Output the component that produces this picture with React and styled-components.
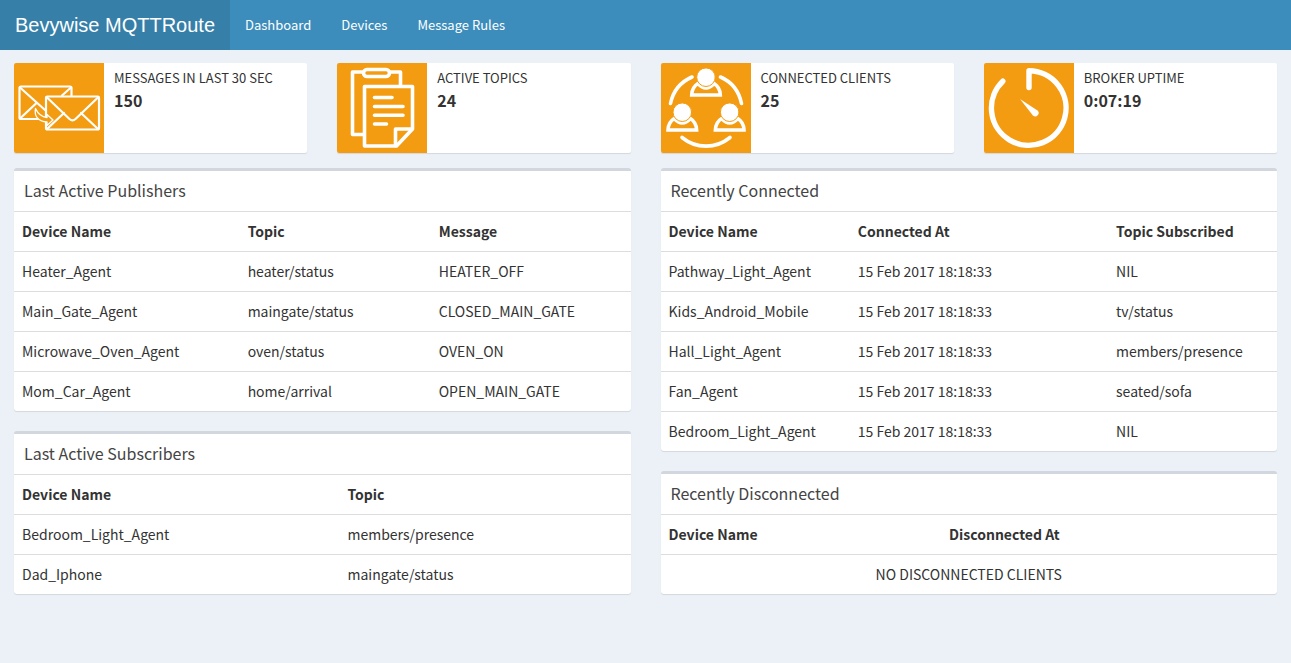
import React from 'react';
import styled, { createGlobalStyle } from 'styled-components';

const publishers = [
  ['Heater_Agent', 'heater/status', 'HEATER_OFF'],
  ['Main_Gate_Agent', 'maingate/status', 'CLOSED_MAIN_GATE'],
  ['Microwave_Oven_Agent', 'oven/status', 'OVEN_ON'],
  ['Mom_Car_Agent', 'home/arrival', 'OPEN_MAIN_GATE'],
];

const subscribers = [
  ['Bedroom_Light_Agent', 'members/presence'],
  ['Dad_Iphone', 'maingate/status'],
];

const connected = [
  ['Pathway_Light_Agent', '15 Feb 2017 18:18:33', 'NIL'],
  ['Kids_Android_Mobile', '15 Feb 2017 18:18:33', 'tv/status'],
  ['Hall_Light_Agent', '15 Feb 2017 18:18:33', 'members/presence'],
  ['Fan_Agent', '15 Feb 2017 18:18:33', 'seated/sofa'],
  ['Bedroom_Light_Agent', '15 Feb 2017 18:18:33', 'NIL'],
];

function MessagesIcon() {
  return (
    <Icon viewBox="0 0 90 90" strokeWidth="2.2">
      <rect x="5.5" y="23.5" width="52" height="32.5" rx="1.5" />
      <path d="M6 24.500L31 47M57 24.500l-9 8M6 55.500l16-15" />
      <rect x="32" y="33.500" width="53" height="33" rx="1.5" fill="#f39c12" />
      <path d="M32.500 34l23 22q3 2.700 6 0l23-22M33 66l17-16M84 66L67 50" />
      <path d="M21.500 45.500C20 53 24 58.500 33 59v3.500l6-5.500-6-5.500v3c-5-.5-9-3.500-11.500-9z" strokeWidth="1.3" fill="#f39c12" />
    </Icon>
  );
}

function TopicsIcon() {
  return (
    <Icon viewBox="0 0 90 90" strokeWidth="3.6">
      <path d="M26 9H15.500V71.500H27M53 9h10.500v13" />
      <rect x="26.500" y="6.500" width="26" height="7" rx="3.500" />
      <path d="M27.500 23.500h48V66L59.500 83h-32z" />
      <path d="M75 66H58.500v16.500" />
      <path d="M37.500 34.500h17.500M37.500 43.500h28.500M37.500 52.300h28.500M37.500 61h12" />
    </Icon>
  );
}

function Person({ x, y }) {
  return (
    <g transform={`translate(${x} ${y})`}>
      <path d="M-8 15.500C-12 18-14.200 22-14.300 27H14.300C14.200 22 12 18 8 15.500Q0 24.500-8 15.500z" strokeWidth="3.6" strokeLinejoin="miter" />
      <circle cy="9.200" r="9.300" fill="#fff" stroke="#f39c12" strokeWidth="1" />
    </g>
  );
}

function ClientsIcon() {
  return (
    <Icon viewBox="0 0 90 90" strokeWidth="3.6">
      <path d="M9.500 40.500C12 28.500 19.500 19 31 14M59.500 14C71 19 78 28.500 80.500 40.500M21 74.500c14 11.500 34 11.500 48 0" />
      <Person x={45} y={5} />
      <Person x={21.3} y={40} />
      <Person x={68.7} y={40} />
    </Icon>
  );
}

function UptimeIcon() {
  return (
    <Icon viewBox="0 0 90 90" strokeWidth="5.4">
      <path d="M45 24.500V7.700A37.300 37.300 0 1 1 18.800 18.200" />
      <path d="M36 36l17.500 11.500a3.200 3.200 0 1 1-4.600 5z" fill="#fff" stroke="none" />
    </Icon>
  );
}

const stats = [
  { label: 'Messages in last 30 sec', value: '150', icon: <MessagesIcon /> },
  { label: 'Active topics', value: '24', icon: <TopicsIcon /> },
  { label: 'Connected clients', value: '25', icon: <ClientsIcon /> },
  { label: 'Broker uptime', value: '0:07:19', icon: <UptimeIcon /> },
];

function Panel({ title, columns, widths, rows, empty }) {
  return (
    <Box>
      <BoxTitle>{title}</BoxTitle>
      <Table>
        <colgroup>
          {widths.map((width, i) => <Col key={i} $width={width} />)}
        </colgroup>
        <thead>
          <tr>
            {columns.map((column) => <th key={column} scope="col">{column}</th>)}
          </tr>
        </thead>
        <tbody>
          {rows.map((row) => (
            <tr key={row[0]}>
              {row.map((cell, i) => <td key={i}>{cell}</td>)}
            </tr>
          ))}
          {rows.length === 0 && (
            <tr>
              <EmptyCell colSpan={columns.length}>{empty}</EmptyCell>
            </tr>
          )}
        </tbody>
      </Table>
    </Box>
  );
}

function App() {
  return (
    <>
      <GlobalStyle />
      <Header>
        <Brand href="#">Bevywise MQTTRoute</Brand>
        <Nav>
          <NavLink href="#dashboard">Dashboard</NavLink>
          <NavLink href="#devices">Devices</NavLink>
          <NavLink href="#rules">Message Rules</NavLink>
        </Nav>
      </Header>
      <Content>
        <Stats>
          {stats.map((stat) => (
            <InfoBox key={stat.label}>
              <InfoIcon>{stat.icon}</InfoIcon>
              <InfoContent>
                <InfoLabel>{stat.label}</InfoLabel>
                <InfoValue>{stat.value}</InfoValue>
              </InfoContent>
            </InfoBox>
          ))}
        </Stats>
        <Columns>
          <Column>
            <Panel
              title="Last Active Publishers"
              columns={['Device Name', 'Topic', 'Message']}
              widths={['36.6%', '31%', '32.4%']}
              rows={publishers}
            />
            <Panel
              title="Last Active Subscribers"
              columns={['Device Name', 'Topic']}
              widths={['52.8%', '47.2%']}
              rows={subscribers}
            />
          </Column>
          <Column>
            <Panel
              title="Recently Connected"
              columns={['Device Name', 'Connected At', 'Topic Subscribed']}
              widths={['30.7%', '41.9%', '27.4%']}
              rows={connected}
            />
            <Panel
              title="Recently Disconnected"
              columns={['Device Name', 'Disconnected At']}
              widths={['45.5%', '54.5%']}
              rows={[]}
              empty="NO DISCONNECTED CLIENTS"
            />
          </Column>
        </Columns>
      </Content>
    </>
  );
}

export default App;

const GlobalStyle = createGlobalStyle`
  * {
    box-sizing: border-box;
  }

  body {
    margin: 0;
    background: #ecf0f7;
    color: #333;
    font-family: "Noto Sans CJK SC", "Open Sans", sans-serif;
    font-size: 14px;
    line-height: 20px;
  }
`;

const Header = styled.header`
  display: flex;
  background: #3c8dbc;
  color: #fff;
`;

const Brand = styled.a`
  width: 230px;
  background: #367fa9;
  color: #fff;
  font-family: "Liberation Sans", Arial, sans-serif;
  font-size: 20px;
  line-height: 50px;
  text-align: center;
  text-decoration: none;
  white-space: nowrap;
`;

const Nav = styled.nav`
  display: flex;
`;

const NavLink = styled.a`
  padding: 15px;
  color: #fff;
  font-size: 13px;
  line-height: 20px;
  text-decoration: none;
`;

const Content = styled.main`
  padding: 13px 14px;
`;

const Stats = styled.section`
  display: grid;
  grid-template-columns: repeat(4, 1fr);
  gap: 30px;
  margin-bottom: 15px;
`;

const InfoBox = styled.div`
  display: flex;
  min-height: 90px;
  overflow: hidden;
  background: #fff;
  border-radius: 2px;
  box-shadow: 0 1px 1px rgba(0, 0, 0, 0.1);
`;

const InfoIcon = styled.div`
  flex: none;
  width: 90px;
  background: #f39c12;
`;

const Icon = styled.svg`
  display: block;
  width: 90px;
  height: 90px;
  fill: none;
  stroke: #fff;
  stroke-linecap: round;
  stroke-linejoin: round;
`;

const InfoContent = styled.div`
  padding: 5px 10px;
`;

const InfoLabel = styled.div`
  font-size: 13px;
  line-height: 20px;
  text-transform: uppercase;
`;

const InfoValue = styled.div`
  font-size: 16px;
  font-weight: bold;
  line-height: 24px;
`;

const Columns = styled.div`
  display: grid;
  grid-template-columns: repeat(2, 1fr);
  gap: 30px;
`;

const Column = styled.div`
  display: flex;
  flex-direction: column;
  gap: 20px;
`;

const Box = styled.section`
  background: #fff;
  border-top: 3px solid #d2d6de;
  border-radius: 3px;
  box-shadow: 0 1px 1px rgba(0, 0, 0, 0.1);
`;

const BoxTitle = styled.h3`
  margin: 0;
  padding: 9px 10px 11px;
  color: #444;
  font-size: 16px;
  font-weight: normal;
  line-height: 20px;
`;

const Table = styled.table`
  width: 100%;
  table-layout: fixed;
  border-spacing: 0;

  th,
  td {
    padding: 8px;
    border-top: 1px solid #ddd;
    font-size: 14px;
    line-height: 23px;
    text-align: left;
  }
`;

const Col = styled.col`
  width: ${(props) => props.$width};
`;

const EmptyCell = styled.td`
  && {
    text-align: center;
  }
`;
